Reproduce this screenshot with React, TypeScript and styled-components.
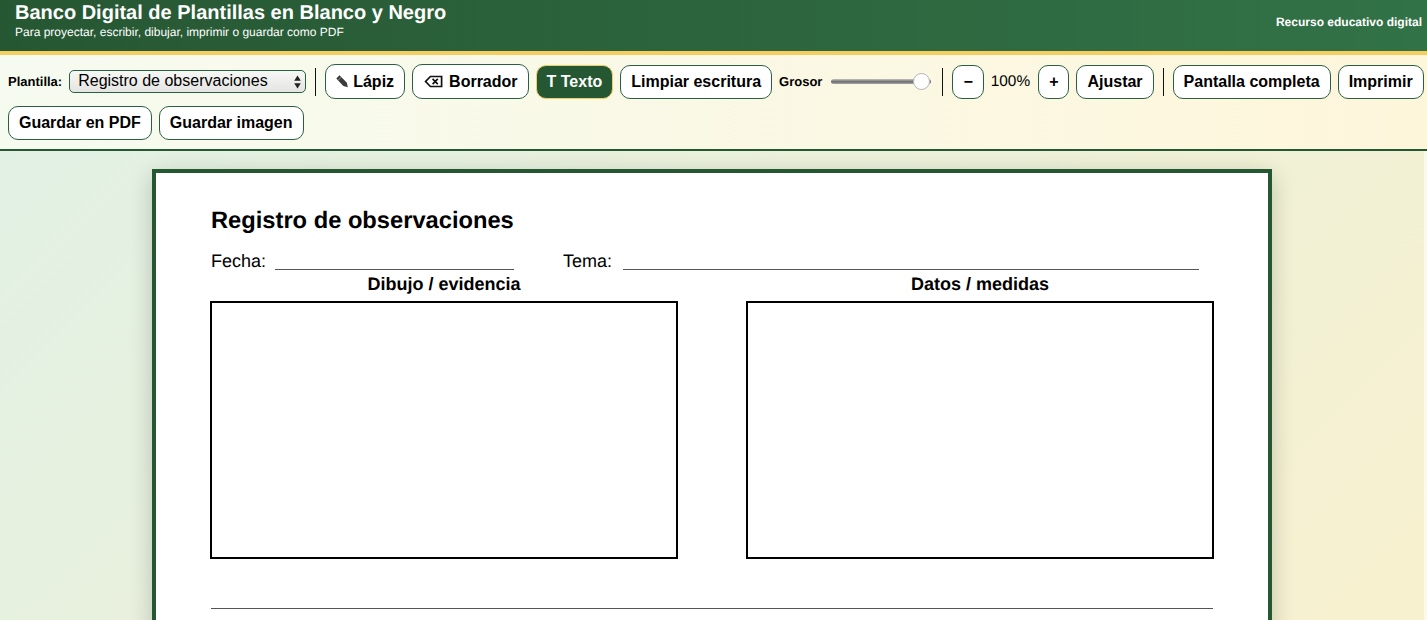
import React from 'react';
import styled, { createGlobalStyle } from 'styled-components';

const GlobalStyle = createGlobalStyle`
  html, body {
    margin: 0;
    padding: 0;
    height: 100%;
    overflow: hidden;
  }
  body {
    font-family: 'Liberation Sans', Arial, sans-serif;
    color: #000;
    text-rendering: geometricPrecision;
  }
`;

const Page = styled.div`
  height: 620px;
  overflow: hidden;
  background: linear-gradient(135deg, #e0f1e6 0%, #f8f1cf 100%);
`;

/* ---- header ---- */

const Header = styled.header`
  box-sizing: border-box;
  height: 55px;
  padding: 2px 5px 0 15px;
  display: flex;
  justify-content: space-between;
  align-items: flex-start;
  color: #fff;
  background: linear-gradient(90deg, #265733 0%, #327247 100%);
  border-bottom: 4px solid #f6cd60;
`;

const Title = styled.h1`
  margin: 0;
  font-size: 20px;
  line-height: 23px;
  font-weight: 700;
`;

const Subtitle = styled.p`
  margin: 0;
  font-size: 12px;
  line-height: 14px;
`;

const Resource = styled.span`
  margin-top: 13px;
  font-size: 12px;
  line-height: 14px;
  font-weight: 700;
`;

/* ---- toolbar ---- */

const Toolbar = styled.div`
  box-sizing: border-box;
  height: 96px;
  padding: 9px 2px 0 8px;
  display: flex;
  flex-wrap: wrap;
  align-items: center;
  align-content: flex-start;
  gap: 7px;
  background: linear-gradient(90deg, #f6fbf0 0%, #fef6db 100%);
  border-bottom: 2px solid #265733;
`;

const Label = styled.label`
  font-size: 13px;
  font-weight: 700;
`;

const SelectWrap = styled.div`
  position: relative;
  width: 237px;
  height: 23px;
`;

const Select = styled.select`
  appearance: none;
  display: block;
  box-sizing: border-box;
  width: 100%;
  height: 100%;
  padding: 0 0 2px 8px;
  font-family: 'Liberation Sans', Arial, sans-serif;
  font-size: 16px;
  color: #000;
  border: 1px solid #2a6040;
  border-radius: 5px;
  background: linear-gradient(180deg, #f7f7f5 0%, #e4e4e2 100%);
`;

const SelectArrows = styled.svg`
  position: absolute;
  top: 5px;
  right: 5px;
  pointer-events: none;
`;

const Divider = styled.span`
  width: 1px;
  height: 28px;
  margin: 0 2px;
  background: #111;
`;

const Button = styled.button<{ $active?: boolean; $tall?: boolean }>`
  display: inline-flex;
  align-items: center;
  box-sizing: border-box;
  height: ${(p) => (p.$tall ? '35px' : '34px')};
  padding: 0 10px;
  font-family: 'Liberation Sans', Arial, sans-serif;
  font-size: 16px;
  font-weight: 700;
  white-space: nowrap;
  color: ${(p) => (p.$active ? '#fff' : '#000')};
  background: ${(p) => (p.$active ? '#265733' : '#fff')};
  border: 1px solid ${(p) => (p.$active ? '#f6cd60' : '#2a6040')};
  border-radius: 10px;
`;

const ButtonIcon = styled.svg`
  flex: none;
  margin-right: 5px;
`;

const Slider = styled.input`
  appearance: none;
  width: 100px;
  height: 18px;
  margin: 0 2px;
  background: transparent;

  &::-webkit-slider-runnable-track {
    height: 5px;
    border-radius: 3px;
    background: linear-gradient(180deg, #c4c4c4 0%, #6c6c6c 55%, #a8a8a8 100%);
  }
  &::-webkit-slider-thumb {
    appearance: none;
    box-sizing: border-box;
    width: 17px;
    height: 17px;
    margin-top: -6px;
    border-radius: 50%;
    background: #fff;
    border: 1px solid #b4b4b4;
  }
`;

const ZoomValue = styled.span`
  padding-right: 1px;
  font-size: 15.4px;
`;

/* ---- sheet ---- */

const Workspace = styled.main`
  box-sizing: border-box;
  height: 469px;
  padding-top: 18px;
  display: flex;
  justify-content: center;
  border-right: 3px solid rgba(255, 255, 255, 0.6);
`;

const Sheet = styled.section`
  box-sizing: border-box;
  flex: none;
  width: 1120px;
  height: 900px;
  padding: 34px 54px 0;
  background: #fff;
  border: 4px solid #265733;
  box-shadow: 0 6px 22px rgba(0, 0, 0, 0.2);
`;

const SheetTitle = styled.h2`
  margin: 0 0 16px 1px;
  font-size: 23.7px;
  line-height: 28px;
  font-weight: 700;
`;

const Fields = styled.div`
  display: flex;
  align-items: flex-end;
  height: 20px;
  padding: 0 15px 0 1px;
  font-size: 18px;
  line-height: 20px;
`;

const FieldLabel = styled.span`
  margin-right: 9px;
`;

const FieldLine = styled.span<{ $width?: number }>`
  ${(p) => (p.$width ? `width: ${p.$width}px; margin-right: 49px;` : 'flex: 1; margin-left: 2px;')}
  height: 0;
  margin-bottom: 1px;
  border-bottom: 1px solid #555;
`;

const Columns = styled.div`
  display: grid;
  grid-template-columns: 468px 468px;
  justify-content: space-between;
  margin-top: 3px;
`;

const ColumnTitle = styled.h3`
  margin: 0 0 7px;
  font-size: 18px;
  line-height: 20px;
  font-weight: 700;
  text-align: center;
`;

const Box = styled.div`
  box-sizing: border-box;
  height: 258px;
  border: 2px solid #000;
`;

const RuleLine = styled.hr`
  margin: 49px 1px 0;
  border: 0;
  border-top: 1px solid #555;
`;

export default function App() {
  return (
    <Page>
      <GlobalStyle />
      <Header>
        <div>
          <Title>Banco Digital de Plantillas en Blanco y Negro</Title>
          <Subtitle>Para proyectar, escribir, dibujar, imprimir o guardar como PDF</Subtitle>
        </div>
        <Resource>Recurso educativo digital</Resource>
      </Header>

      <Toolbar>
        <Label htmlFor="plantilla">Plantilla:</Label>
        <SelectWrap>
          <Select id="plantilla" defaultValue="obs">
            <option value="obs">Registro de observaciones</option>
          </Select>
          <SelectArrows width="7" height="14" viewBox="0 0 7 14">
            <path d="M3.5 0.5 L6.8 5.8 H0.2 Z M3.5 13.5 L0.2 8.2 H6.8 Z" fill="#222" />
          </SelectArrows>
        </SelectWrap>
        <Divider />
        <Button $tall>
          <ButtonIcon width="12" height="13" viewBox="0 0 12 13">
            <path d="M0.3 3.5 L3.5 0.3 L10.9 7.7 L11.8 12.3 L7.3 11.1 Z" fill="#3a3a3a" />
            <path d="M2.2 5.2 L5.2 2.2" stroke="#ddd" strokeWidth="0.6" />
          </ButtonIcon>
          Lápiz
        </Button>
        <Button $tall>
          <ButtonIcon width="21" height="13" viewBox="0 0 21 13">
            <path
              d="M7.4 1.5 H18.6 V11.5 H7.4 L2.6 6.5 Z M9.6 3.9 L14.8 9.1 M14.8 3.9 L9.6 9.1"
              fill="none"
              stroke="#111"
              strokeWidth="1.7"
            />
          </ButtonIcon>
          Borrador
        </Button>
        <Button $active>T Texto</Button>
        <Button>Limpiar escritura</Button>
        <Label htmlFor="grosor">Grosor</Label>
        <Slider id="grosor" type="range" min={0} max={100} defaultValue={98} />
        <Divider />
        <Button>−</Button>
        <ZoomValue>100%</ZoomValue>
        <Button>+</Button>
        <Button>Ajustar</Button>
        <Divider />
        <Button>Pantalla completa</Button>
        <Button>Imprimir</Button>
        <Button>Guardar en PDF</Button>
        <Button>Guardar imagen</Button>
      </Toolbar>

      <Workspace>
        <Sheet>
          <SheetTitle>Registro de observaciones</SheetTitle>
          <Fields>
            <FieldLabel>Fecha:</FieldLabel>
            <FieldLine $width={239} />
            <FieldLabel>Tema:</FieldLabel>
            <FieldLine />
          </Fields>
          <Columns>
            <div>
              <ColumnTitle>Dibujo / evidencia</ColumnTitle>
              <Box />
            </div>
            <div>
              <ColumnTitle>Datos / medidas</ColumnTitle>
              <Box />
            </div>
          </Columns>
          <RuleLine />
        </Sheet>
      </Workspace>
    </Page>
  );
}
